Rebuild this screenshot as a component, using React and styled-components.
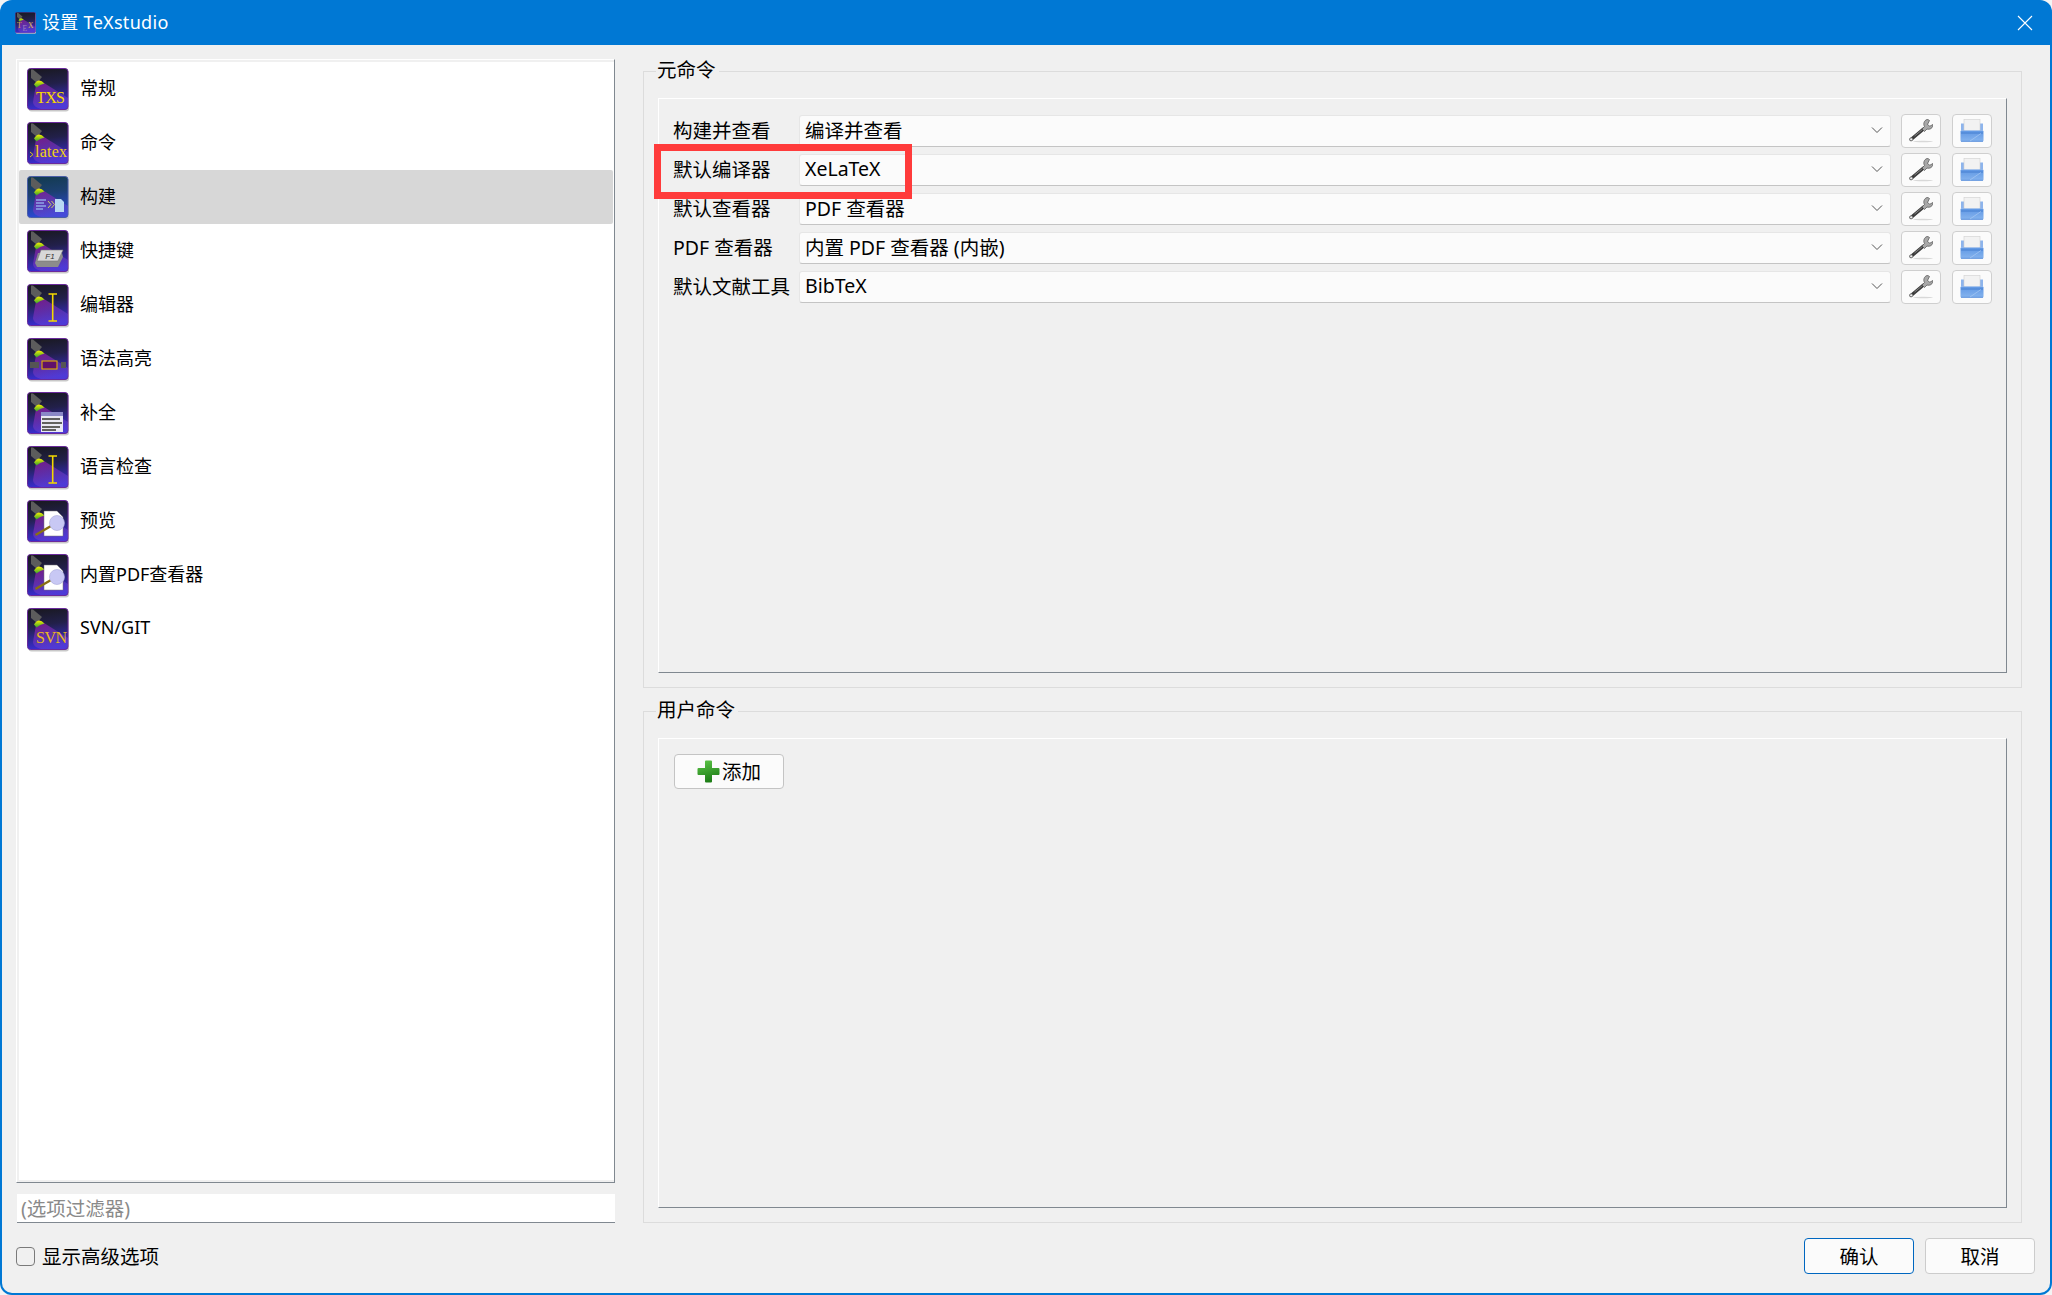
import React from "react";
import styled, { createGlobalStyle } from "styled-components";

const UI_FONT = `"Noto Sans", "Noto Sans CJK SC", sans-serif`;

const GlobalStyle = createGlobalStyle`
  html, body {
    margin: 0;
    padding: 0;
    width: 2052px;
    height: 1295px;
    overflow: hidden;
    background: #f4f4f4;
    font-family: ${UI_FONT};
    color: #000;
  }
  * { box-sizing: border-box; }
`;

const PAGES = [
  { kind: "txs", label: "常规" },
  { kind: "latex", label: "命令" },
  { kind: "build", label: "构建", active: true },
  { kind: "keys", label: "快捷键" },
  { kind: "cursor", label: "编辑器" },
  { kind: "syntax", label: "语法高亮" },
  { kind: "complete", label: "补全" },
  { kind: "cursor", label: "语言检查" },
  { kind: "preview", label: "预览" },
  { kind: "preview", label: "内置PDF查看器" },
  { kind: "svn", label: "SVN/GIT" },
];

const COMMANDS = [
  { label: "构建并查看", value: "编译并查看" },
  { label: "默认编译器", value: "XeLaTeX" },
  { label: "默认查看器", value: "PDF 查看器" },
  { label: "PDF 查看器", value: "内置 PDF 查看器 (内嵌)" },
  { label: "默认文献工具", value: "BibTeX" },
];

const ICON_SERIF = "Liberation Serif, serif";

function IconArt({ kind }) {
  switch (kind) {
    case "txs":
      return (
        <text x="9" y="35" fontSize="16" fontFamily={ICON_SERIF} fill="#f8d800" textLength="29">TXS</text>
      );
    case "latex":
      return (
        <g fontFamily={ICON_SERIF} fill="#f4d410">
          <path d="M3 30l3 2.500-3 2.500" stroke="#f4d410" strokeWidth=".9" fill="none" />
          <text x="8" y="35" fontSize="16" textLength="32">latex</text>
        </g>
      );
    case "svn":
      return (
        <text x="9" y="35" fontSize="16" fontFamily={ICON_SERIF} fill="#e8b820" textLength="31">SVN</text>
      );
    case "build":
      return (
        <g>
          <path d="M9 24h10M9 27h8M9 30h10M9 33h7" stroke="#8fa6e8" strokeWidth="1.600" />
          <path d="M21 25l3 3.500-3 3.500M24.500 25l3 3.500-3 3.500" stroke="#d0d060" strokeWidth="1" fill="none" />
          <path d="M28 23h6l3 3v10h-9z" fill="#b8d8f4" />
        </g>
      );
    case "keys":
      return (
        <g>
          <path d="M11 23h24l1 4-5 10H10l-2-4z" fill="#8c8c8c" />
          <path d="M14 20h22l-5 11H10z" fill="#d8d8d8" stroke="#777" strokeWidth=".6" />
          <text x="23" y="29" fontSize="8" fontStyle="italic" fontFamily="Liberation Sans, sans-serif" fill="#333" textAnchor="middle">F1</text>
        </g>
      );
    case "cursor":
      return (
        <path d="M21.500 10h8.500M25.700 10v27M21.500 37h8.500" stroke="#f4d800" strokeWidth="1.600" fill="none" />
      );
    case "syntax":
      return (
        <g>
          <rect x="3" y="24" width="9" height="6" fill="#555" />
          <rect x="15" y="23" width="15" height="8" fill="#60106a" stroke="#e0b000" strokeWidth="1.100" />
          <rect x="34" y="24" width="5" height="6" fill="#555" />
        </g>
      );
    case "complete":
      return (
        <g>
          <rect x="14" y="20" width="22" height="20" fill="#e8e8f4" />
          <rect x="14" y="20" width="22" height="4" fill="#8a88c8" />
          <path d="M15 27h18M15 31h20M15 35h18M15 38h14" stroke="#606060" strokeWidth="2.200" />
        </g>
      );
    case "preview":
      return (
        <g>
          <path d="M17 11h13l6 6v19H17z" fill="#fff" stroke="#777" strokeWidth=".5" />
          <path d="M8.500 35L24 26" stroke="#8a7010" strokeWidth="2.400" />
          <circle cx="30" cy="23" r="7.500" fill="#c8c8f4" stroke="#a8a8d8" strokeWidth=".6" />
        </g>
      );
    case "tex":
      return (
        <g fontFamily={ICON_SERIF} fontSize="15" fill="#d8b040">
          <text x="4" y="32">T</text>
          <text x="15" y="37" fill="#a080c0">E</text>
          <text x="26" y="32" fill="#e0c050">X</text>
        </g>
      );
    default:
      return null;
  }
}

function StageIcon({ kind, size = 42 }) {
  const isBuild = kind === "build";
  const bgId = isBuild ? "stage-bg-build" : "stage-bg";
  return (
    <svg width={size} height={size * 44 / 42} viewBox="0 0 42 44" style={{ flex: "none" }}>
      <defs>
        <linearGradient id={bgId} x1="0" y1="0" x2="0.15" y2="1">
          <stop offset="0" stopColor={isBuild ? "#123a4c" : "#18181c"} />
          <stop offset="0.45" stopColor={isBuild ? "#1c4070" : "#22204a"} />
          <stop offset="1" stopColor={isBuild ? "#2b48d4" : "#3a2cd0"} />
        </linearGradient>
        <linearGradient id="stage-cone" x1="0.2" y1="0" x2="0.7" y2="1">
          <stop offset="0" stopColor="#8a1ca0" stopOpacity="0.8" />
          <stop offset="1" stopColor="#6a50e0" stopOpacity="0.4" />
        </linearGradient>
        <linearGradient id="stage-lamp" x1="0" y1="0" x2="0" y2="1">
          <stop offset="0" stopColor="#f8f000" />
          <stop offset="1" stopColor="#30a030" />
        </linearGradient>
      </defs>
      <rect x="1.500" y="2" width="40.500" height="41.500" rx="3" fill="#c8c8c8" />
      <rect x="0.500" y="0.500" width="40.500" height="41" rx="3" fill={`url(#${bgId})`} stroke={isBuild ? "#4a5ea8" : "#6a2a9c"} />
      <path d="M9 17L17 15L41 30V37Q41 41 37 41H14Q6 39 6 34Z" fill="url(#stage-cone)" />
      <path d="M4 1.500L6 1.500L15 9L10 15L4 10Z" fill="#5c5c5c" />
      <path d="M7 16.500Q11.500 9 17.500 15.500Q13 16.500 9.500 19.500Z" fill="url(#stage-lamp)" />
      <IconArt kind={kind} />
    </svg>
  );
}

function WrenchIcon() {
  return (
    <svg width="24" height="24" viewBox="0 0 24 24">
      <ellipse cx="14" cy="22.500" rx="10" ry=".7" fill="#d8d8d8" />
      <path d="M2 20.500L14.500 10" stroke="#3c3c3c" strokeWidth="3.200" strokeLinecap="round" />
      <circle cx="2.200" cy="20.300" r="1.500" fill="#f0f0f0" stroke="#666" strokeWidth=".8" />
      <path d="M5.500 17L13.500 10.500" stroke="#a0a0a0" strokeWidth=".7" />
      <path d="M18 .5C15 1.500 14 5 15.500 7.500L13 10L15.500 12.500L18 10C21 11 24 9 24 5.500L20.800 7.200L18.500 5.500L20.500 1.500C19.500 .7 18.800 .4 18 .5Z" fill="#a8a8a8" stroke="#505050" strokeWidth=".7" />
    </svg>
  );
}

function PrinterIcon() {
  return (
    <svg width="24" height="24" viewBox="0 0 24 24">
      <defs>
        <linearGradient id="printer-body" x1="0" y1="0" x2="0" y2="1">
          <stop offset="0" stopColor="#5f97e4" />
          <stop offset="1" stopColor="#86b4ee" />
        </linearGradient>
      </defs>
      <path d="M1 4.500h22v7H1z" fill="#8db4ec" />
      <rect x="4" y="0.500" width="16" height="12" fill="#f2f2f2" stroke="#d0d0d0" strokeWidth=".6" />
      <rect x="0.500" y="11.500" width="23" height="11" rx="1" fill="url(#printer-body)" />
      <path d="M1 14h22" stroke="#3f78cc" strokeWidth=".8" />
      <path d="M1 22.300h22" stroke="#4a84d8" strokeWidth=".8" />
      <path d="M10 22L21 14.500" stroke="#a8c8f2" strokeWidth=".7" />
    </svg>
  );
}

function PlusIcon() {
  return (
    <svg width="23" height="23" viewBox="0 0 23 23">
      <defs>
        <linearGradient id="plus-fill" x1="0" y1="0" x2="0.3" y2="1">
          <stop offset="0" stopColor="#5fc84a" />
          <stop offset="1" stopColor="#1f7f18" />
        </linearGradient>
      </defs>
      <path d="M8 1.500Q8 .5 9 .5h5Q15 .5 15 1.500V8h6.500Q22.500 8 22.500 9v5Q22.500 15 21.500 15H15v6.500Q15 22.500 14 22.500H9Q8 22.500 8 21.500V15H1.500Q.5 15 .5 14V9Q.5 8 1.500 8H8Z" fill="url(#plus-fill)" />
    </svg>
  );
}

function Chevron() {
  return (
    <svg width="12" height="8" viewBox="0 0 12 8">
      <path d="M1 1.500L6 6.500L11 1.500" stroke="#555" strokeWidth="1" fill="none" />
    </svg>
  );
}

export default function App() {
  return (
    <>
      <GlobalStyle />
      <Window>
        <TitleBar>
          <StageIcon kind="tex" size={21} />
          <WindowTitle>设置 TeXstudio</WindowTitle>
          <CloseGlyph width="16" height="16" viewBox="0 0 16 16">
            <path d="M1 1L15 15M15 1L1 15" stroke="#fff" strokeWidth="1.100" />
          </CloseGlyph>
        </TitleBar>
        <DialogBody>
          <MainRow>
            <SideColumn>
              <PageList>
                <PageListInner>
                  {PAGES.map((page) => (
                    <PageRow key={page.label} $active={page.active}>
                      <StageIcon kind={page.kind} />
                      <PageLabel>{page.label}</PageLabel>
                    </PageRow>
                  ))}
                </PageListInner>
              </PageList>
              <FilterInput placeholder="(选项过滤器)" />
            </SideColumn>
            <ContentColumn>
              <GroupBox $height={617}>
                <GroupTitle>元命令</GroupTitle>
                <SunkenPanel>
                  <CommandGrid>
                    {COMMANDS.map((cmd) => (
                      <CommandRow key={cmd.label}>
                        <CommandLabel>{cmd.label}</CommandLabel>
                        <Combo>
                          <span>{cmd.value}</span>
                          <Chevron />
                        </Combo>
                        <ToolButton><WrenchIcon /></ToolButton>
                        <ToolButton><PrinterIcon /></ToolButton>
                      </CommandRow>
                    ))}
                  </CommandGrid>
                  <Highlight />
                </SunkenPanel>
              </GroupBox>
              <GroupBox $height={512}>
                <GroupTitle>用户命令</GroupTitle>
                <SunkenPanel>
                  <AddButton>
                    <PlusIcon />
                    <span>添加</span>
                  </AddButton>
                </SunkenPanel>
              </GroupBox>
            </ContentColumn>
          </MainRow>
          <FooterRow>
            <AdvancedToggle>
              <CheckBox type="checkbox" />
              <span>显示高级选项</span>
            </AdvancedToggle>
            <DialogButtons>
              <DialogButton $primary>确认</DialogButton>
              <DialogButton>取消</DialogButton>
            </DialogButtons>
          </FooterRow>
        </DialogBody>
      </Window>
    </>
  );
}

const Window = styled.div`
  width: 2052px;
  height: 1295px;
  display: flex;
  flex-direction: column;
  background: #0078d4;
  border-radius: 12px;
  overflow: hidden;
`;

const TitleBar = styled.div`
  height: 45px;
  flex: none;
  display: flex;
  align-items: center;
  gap: 6px;
  padding: 0 19px 0 15px;
  color: #fff;
`;

const WindowTitle = styled.div`
  flex: 1;
  font-size: 18px;
  letter-spacing: 0.3px;
  padding-bottom: 3px;
`;

const CloseGlyph = styled.svg`
  flex: none;
`;

const DialogBody = styled.div`
  flex: 1;
  display: flex;
  flex-direction: column;
  margin: 0 2px 2px;
  padding: 14px 15px 0 14px;
  background: #f0f0f0;
  border-radius: 0 0 10px 10px;
`;

const MainRow = styled.div`
  display: flex;
  gap: 28px;
  height: 1164px;
  padding-right: 13px;
`;

const SideColumn = styled.div`
  width: 599px;
  flex: none;
  display: flex;
  flex-direction: column;
  gap: 11px;
`;

const PageList = styled.div`
  flex: 1;
  padding: 2px 0 2px 2px;
  background: #f0f0f0;
  border: 1px solid;
  border-color: #fff #808890 #808890 #fff;
  display: flex;
`;

const PageListInner = styled.div`
  flex: 1;
  background: #fff;
`;

const PageRow = styled.div`
  height: 54px;
  display: flex;
  align-items: center;
  gap: 11px;
  padding: 2px 0 0 8px;
  margin-right: 1px;
  font-size: 18px;
  border-radius: 2px;
  background: ${(p) => (p.$active ? "#d7d7d7" : "transparent")};
`;

const PageLabel = styled.span`
  padding-bottom: 6px;
`;

const FilterInput = styled.input`
  height: 29px;
  margin-left: 1px;
  flex: none;
  padding: 0 4px;
  background: #fff;
  border: 0;
  border-bottom: 1px solid #808890;
  font-family: ${UI_FONT};
  font-size: 19.500px;
  outline: none;

  &::placeholder {
    color: #8a8a8a;
    opacity: 1;
  }
`;

const ContentColumn = styled.div`
  flex: 1;
  display: flex;
  flex-direction: column;
  gap: 23px;
  padding-top: 12px;
`;

const GroupBox = styled.div`
  position: relative;
  height: ${(p) => p.$height}px;
  display: flex;
  padding: 26px 14px 14px 14px;
  border: 1px solid #dcdcdc;
`;

const GroupTitle = styled.div`
  position: absolute;
  left: 12px;
  top: -15px;
  padding: 0 3px 2px 1px;
  background: #f0f0f0;
  font-size: 19.500px;
  line-height: 26px;
`;

const SunkenPanel = styled.div`
  position: relative;
  flex: 1;
  border: 1px solid;
  border-color: #fff #808890 #808890 #fff;
  padding: 15px 14px;
`;

const CommandGrid = styled.div`
  display: flex;
  flex-direction: column;
  gap: 5px;
`;

const CommandRow = styled.div`
  display: flex;
  align-items: center;
  gap: 11px;
  height: 34px;
`;

const CommandLabel = styled.div`
  width: 115px;
  flex: none;
  font-size: 19.500px;
  white-space: nowrap;
  padding-bottom: 3px;
`;

const Combo = styled.div`
  flex: 1;
  height: 32px;
  margin-right: -1px;
  display: flex;
  align-items: center;
  justify-content: space-between;
  padding: 0 7px 3px 5px;
  background: #fbfbfb;
  border: 1px solid #e6e6e6;
  border-bottom-color: #c4c4c4;
  border-radius: 3px;
  font-size: 19.500px;
`;

const ToolButton = styled.div`
  width: 40px;
  height: 34px;
  flex: none;
  display: flex;
  align-items: center;
  justify-content: center;
  background: #fbfbfb;
  border: 1px solid #cfcfcf;
  border-radius: 4px;
`;

const Highlight = styled.div`
  position: absolute;
  left: -5px;
  top: 45px;
  width: 258px;
  height: 55px;
  border: 7px solid #ff3b3b;
`;

const AddButton = styled.div`
  width: 110px;
  height: 35px;
  margin-left: 1px;
  display: flex;
  align-items: center;
  justify-content: center;
  gap: 2px;
  padding-bottom: 1px;
  background: #fbfbfb;
  border: 1px solid #c4c4c4;
  border-radius: 4px;
  font-size: 19.500px;

  span {
    padding-bottom: 2px;
  }
`;

const FooterRow = styled.div`
  display: flex;
  align-items: center;
  justify-content: space-between;
  padding: 15px 0 0 0;
`;

const AdvancedToggle = styled.label`
  display: flex;
  align-items: center;
  gap: 7px;
  font-size: 19.500px;

  span {
    padding-bottom: 2px;
  }
`;

const CheckBox = styled.input`
  appearance: none;
  margin: 0;
  width: 19px;
  height: 19px;
  border: 1px solid #7a7a7a;
  border-radius: 4px;
  background: #f0f0f0;
`;

const DialogButtons = styled.div`
  display: flex;
  gap: 11px;
`;

const DialogButton = styled.div`
  width: 110px;
  height: 36px;
  display: flex;
  align-items: center;
  justify-content: center;
  padding-bottom: 2px;
  background: #fbfbfb;
  border: 1px solid ${(p) => (p.$primary ? "#0067c0" : "#cccccc")};
  border-radius: 4px;
  font-size: 19.500px;
`;
